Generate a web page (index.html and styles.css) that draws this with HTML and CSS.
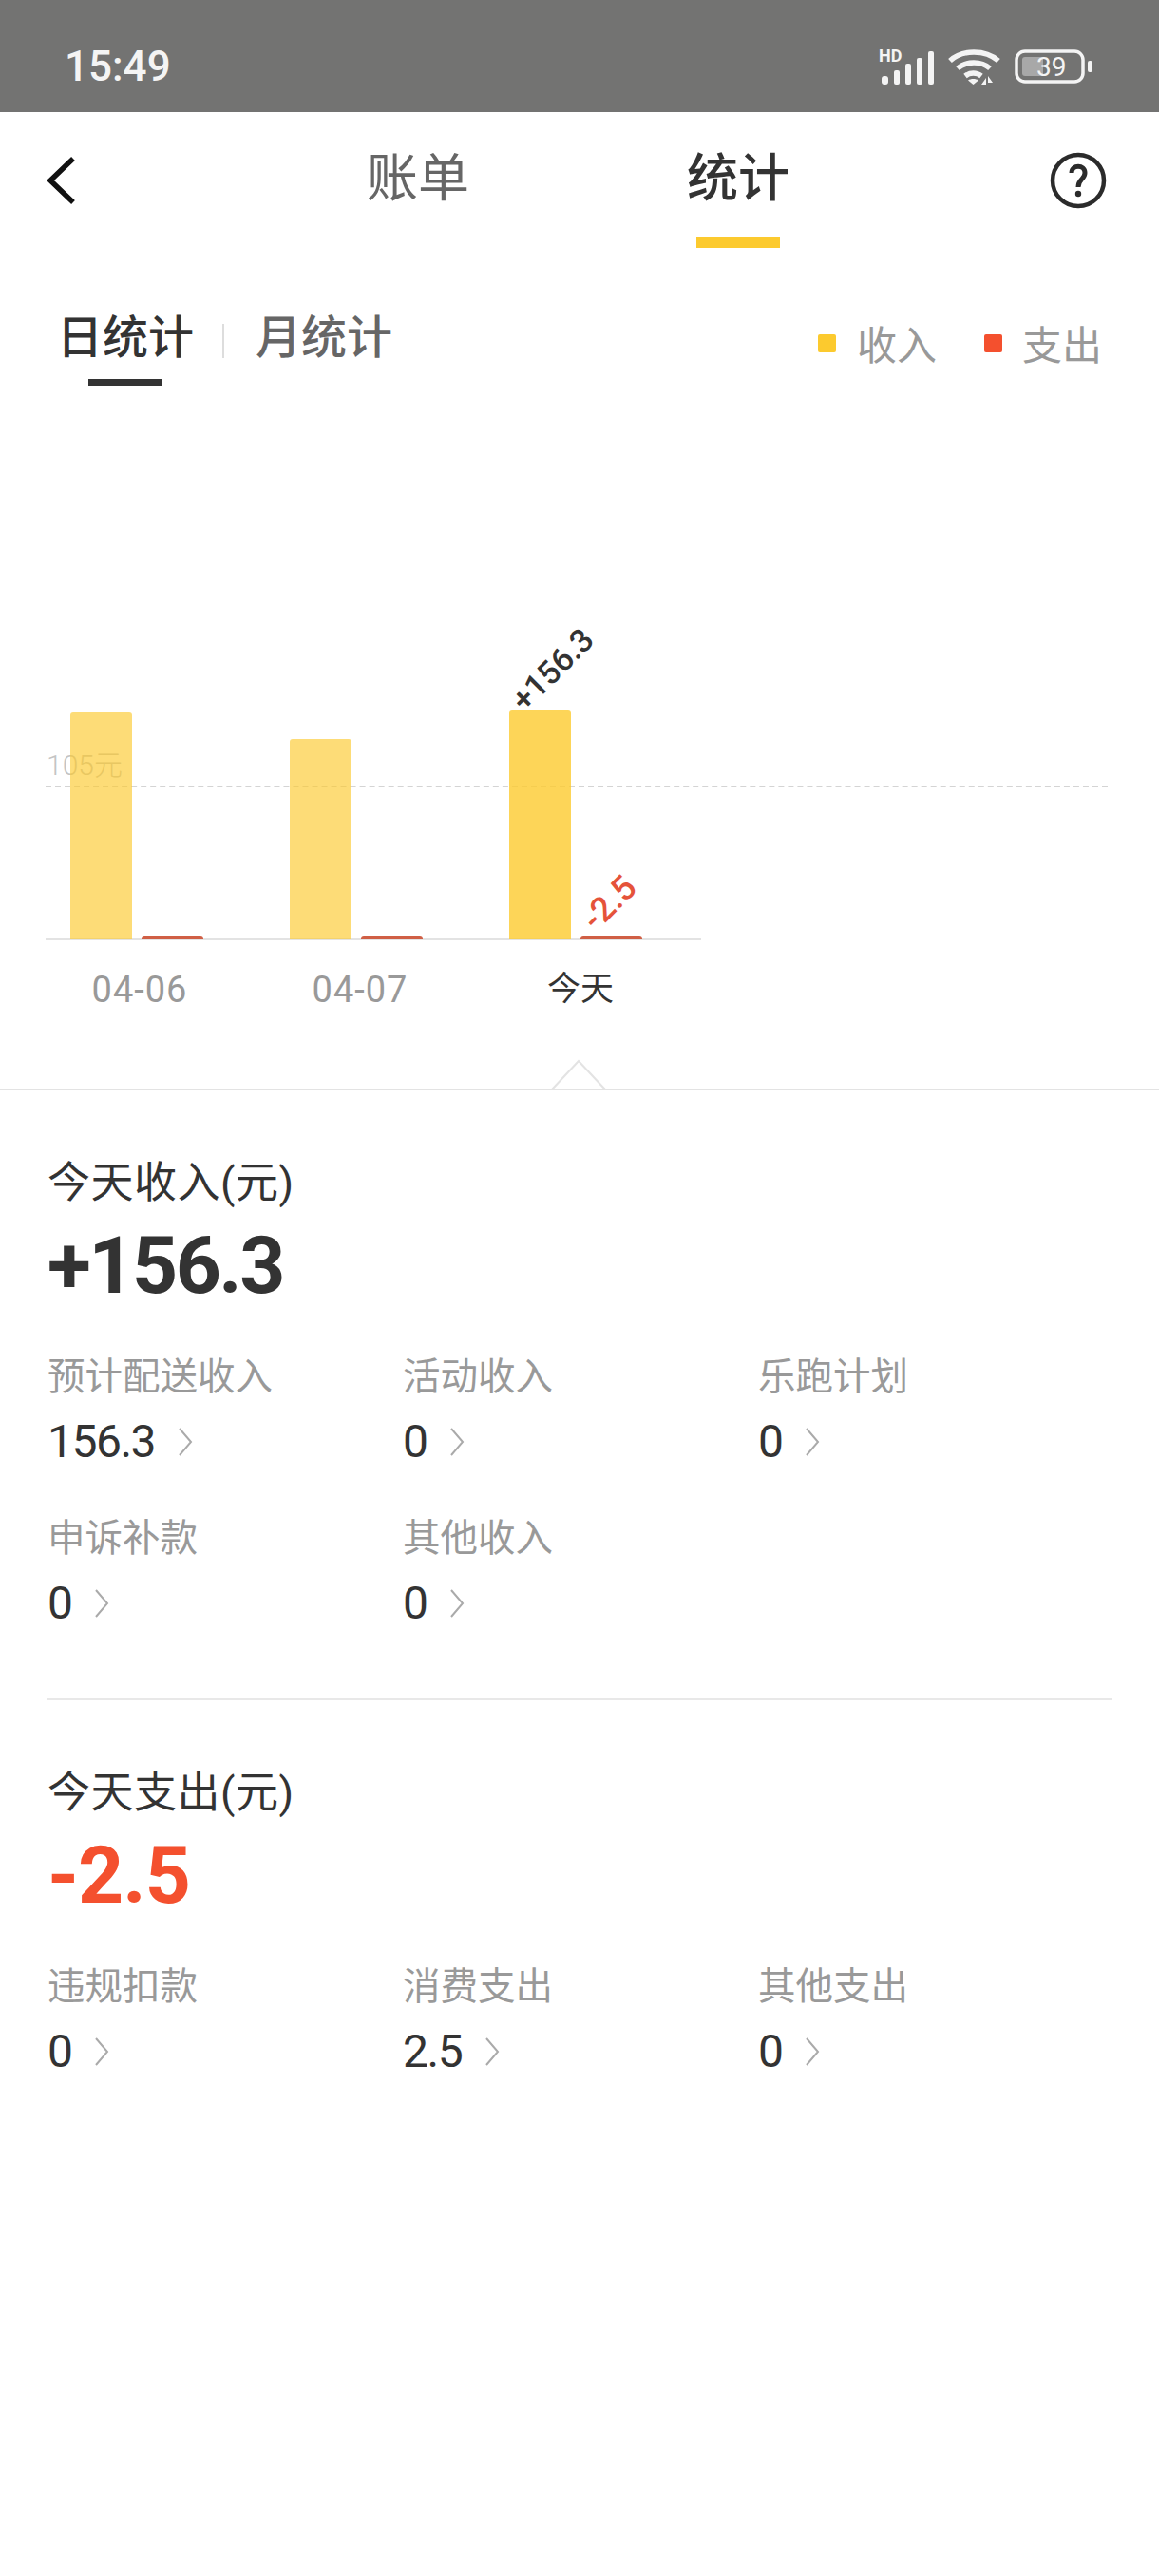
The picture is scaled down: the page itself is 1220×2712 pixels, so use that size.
FILE: index.html
```html
<!DOCTYPE html>
<html lang="zh-CN">
<head>
    <meta charset="UTF-8">
    <meta name="viewport" content="width=device-width, initial-scale=1.0">
    <title>统计</title>
    <link rel="stylesheet" href="styles.css">
</head>
<body>
    <div class="status-bar">
        <span class="time">15:49</span>
        <div class="status-icons">
            <svg class="icon-signal" width="62" height="48" viewBox="0 -4 62 48">
                <text x="4" y="15" class="hd-text">HD</text>
                <g fill="#f4f4f4">
                    <rect x="7" y="30" width="7" height="9" rx="3"/>
                    <rect x="20" y="24" width="6" height="15" rx="2"/>
                    <rect x="32" y="17" width="6" height="22" rx="2"/>
                    <rect x="44" y="11" width="6" height="28" rx="2"/>
                    <rect x="56" y="4" width="6" height="35" rx="2"/>
                </g>
            </svg>
            <svg class="icon-wifi" width="56" height="42" viewBox="0 0 56 42">
                <g fill="none" stroke="#f4f4f4" stroke-width="5.5">
                    <path d="M3 15C16 3 40 3 54 15"/>
                    <path d="M11 23C20 15 36 15 45 23"/>
                    <path d="M19 31C24 27 31 27 36 31"/>
                </g>
                <path d="M22 35.500C25 33.500 30 33.500 33 35.500L27.500 40Z" fill="#f4f4f4"/>
                <path d="M36 40L41 33V40ZM43 31L48 38H43Z" fill="#f4f4f4"/>
            </svg>
            <svg class="icon-battery" width="84" height="36" viewBox="0 0 84 36">
                <rect x="8" y="8" width="22" height="20" rx="3" fill="#a8a8a8"/>
                <rect x="2" y="2" width="70" height="32" rx="9" fill="none" stroke="#f4f4f4" stroke-width="3.500"/>
                <rect x="77" y="12" width="5" height="12" rx="2" fill="#f4f4f4"/>
                <text x="23" y="28" class="battery-text">39</text>
            </svg>
        </div>
    </div>

    <nav class="nav">
        <svg class="back" width="32" height="50" viewBox="0 0 32 50">
            <path d="M29 2L5 25L29 48" fill="none" stroke="#111" stroke-width="5.500"/>
        </svg>
        <div class="tabs">
            <div class="tab">账单</div>
            <div class="tab active">统计<div class="tab-line"></div></div>
        </div>
        <svg class="help" width="60" height="60" viewBox="0 0 60 60">
            <circle cx="30" cy="30" r="27" fill="none" stroke="#2b2b2b" stroke-width="4.500"/>
            <path d="M23 22C23 13 37 13 37 22C37 29 30 28 30 37" fill="none" stroke="#2b2b2b" stroke-width="5"/>
            <circle cx="30" cy="44" r="3.200" fill="#2b2b2b"/>
        </svg>
    </nav>

    <div class="sub-row">
        <div class="sub-tabs">
            <div class="sub-tab active">日统计<div class="sub-line"></div></div>
            <div class="sub-sep"></div>
            <div class="sub-tab">月统计</div>
        </div>
        <div class="legend">
            <span class="dot dot-income"></span><span class="legend-text">收入</span>
            <span class="dot dot-expense"></span><span class="legend-text">支出</span>
        </div>
    </div>

    <div class="chart">
        <div class="plot">
            <div class="guide"></div>
            <span class="guide-label">105元</span>
            <div class="group">
                <div class="bar bar-income" style="height: 239px"></div>
                <div class="bar bar-expense"></div>
            </div>
            <div class="group">
                <div class="bar bar-income" style="height: 211px"></div>
                <div class="bar bar-expense"></div>
            </div>
            <div class="group">
                <div class="bar bar-income today" style="height: 241px"><span class="bar-value">+156.3</span></div>
                <div class="bar bar-expense"><span class="bar-value value-red">-2.5</span></div>
            </div>
        </div>
        <div class="dates">
            <span class="date">04-06</span>
            <span class="date">04-07</span>
            <span class="date date-today">今天</span>
        </div>
        <svg class="pointer" width="58" height="33" viewBox="0 0 58 33">
            <path d="M1 32L29 2L57 32" fill="#fff" stroke="#e3e3e3" stroke-width="2"/>
        </svg>
    </div>

    <section class="summary">
        <h2 class="summary-title">今天收入(元)</h2>
        <div class="summary-total">+156.3</div>
        <div class="items">
            <div class="item">
                <div class="item-label">预计配送收入</div>
                <div class="item-value">156.3<svg class="arrow" width="16" height="30" viewBox="0 0 16 30"><path d="M2 1L14 15L2 29" fill="none" stroke="#aaa" stroke-width="2"/></svg></div>
            </div>
            <div class="item">
                <div class="item-label">活动收入</div>
                <div class="item-value">0<svg class="arrow" width="16" height="30" viewBox="0 0 16 30"><path d="M2 1L14 15L2 29" fill="none" stroke="#aaa" stroke-width="2"/></svg></div>
            </div>
            <div class="item">
                <div class="item-label">乐跑计划</div>
                <div class="item-value">0<svg class="arrow" width="16" height="30" viewBox="0 0 16 30"><path d="M2 1L14 15L2 29" fill="none" stroke="#aaa" stroke-width="2"/></svg></div>
            </div>
            <div class="item">
                <div class="item-label">申诉补款</div>
                <div class="item-value">0<svg class="arrow" width="16" height="30" viewBox="0 0 16 30"><path d="M2 1L14 15L2 29" fill="none" stroke="#aaa" stroke-width="2"/></svg></div>
            </div>
            <div class="item">
                <div class="item-label">其他收入</div>
                <div class="item-value">0<svg class="arrow" width="16" height="30" viewBox="0 0 16 30"><path d="M2 1L14 15L2 29" fill="none" stroke="#aaa" stroke-width="2"/></svg></div>
            </div>
        </div>
    </section>

    <section class="summary summary-expense">
        <h2 class="summary-title">今天支出(元)</h2>
        <div class="summary-total total-red">-2.5</div>
        <div class="items">
            <div class="item">
                <div class="item-label">违规扣款</div>
                <div class="item-value">0<svg class="arrow" width="16" height="30" viewBox="0 0 16 30"><path d="M2 1L14 15L2 29" fill="none" stroke="#aaa" stroke-width="2"/></svg></div>
            </div>
            <div class="item">
                <div class="item-label">消费支出</div>
                <div class="item-value">2.5<svg class="arrow" width="16" height="30" viewBox="0 0 16 30"><path d="M2 1L14 15L2 29" fill="none" stroke="#aaa" stroke-width="2"/></svg></div>
            </div>
            <div class="item">
                <div class="item-label">其他支出</div>
                <div class="item-value">0<svg class="arrow" width="16" height="30" viewBox="0 0 16 30"><path d="M2 1L14 15L2 29" fill="none" stroke="#aaa" stroke-width="2"/></svg></div>
            </div>
        </div>
    </section>
</body>
</html>
```

FILE: styles.css
```css
body {
    font-family: Roboto, "Noto Sans CJK SC", sans-serif;
    margin: 0;
    padding: 0;
    width: 1220px;
    height: 2712px;
    overflow: hidden;
    background-color: #fff;
    color: #333;
}
.status-bar {
    height: 118px;
    background-color: #737372;
    display: flex;
    align-items: center;
    justify-content: space-between;
    padding: 22px 68px 0;
    box-sizing: border-box;
}
.time {
    font-size: 44px;
    font-weight: 500;
    color: #f4f4f4;
}
.status-icons {
    display: flex;
    align-items: center;
}
.icon-signal {
    margin-right: 14px;
}
.icon-wifi {
    margin-right: 15px;
}
.hd-text {
    font-size: 18px;
    font-weight: 700;
    fill: #f4f4f4;
}
.battery-text {
    font-size: 28px;
    fill: #f4f4f4;
}
.nav {
    height: 150px;
    display: flex;
    align-items: flex-start;
    padding-left: 48px;
    padding-right: 55px;
}
.back {
    margin-top: 47px;
}
.tabs {
    display: flex;
    margin-left: 306px;
    margin-top: 44px;
    gap: 229px;
}
.tab {
    font-size: 54px;
    line-height: 54px;
    color: #666;
    width: 108px;
}
.tab.active {
    color: #333;
    font-weight: 500;
}
.tab-line {
    width: 88px;
    height: 11px;
    background-color: #fcca2e;
    margin: 34px auto 0;
}
.help {
    margin-left: auto;
    margin-top: 42px;
}
.sub-row {
    display: flex;
    justify-content: space-between;
    padding: 65px 60px 0 60px;
    height: 88px;
}
.sub-tabs {
    display: flex;
    align-items: flex-start;
}
.sub-tab {
    font-size: 48px;
    line-height: 46px;
    color: #666;
    font-weight: 500;
}
.sub-tab.active {
    color: #333;
}
.sub-line {
    width: 78px;
    height: 7px;
    background-color: #333;
    margin: 20px auto 0;
}
.sub-sep {
    width: 2px;
    height: 36px;
    background-color: #ddd;
    margin: 8px 33px 0 30px;
}
.legend {
    display: flex;
    align-items: center;
    height: 50px;
    margin-top: 2px;
}
.dot {
    width: 19px;
    height: 19px;
    border-radius: 2px;
    margin-top: 2px;
}
.dot-income {
    background-color: #fcca2e;
    margin-right: 22px;
}
.dot-expense {
    background-color: #f4502e;
    margin-right: 21px;
    margin-left: 50px;
}
.legend-text {
    font-size: 42px;
    color: #999;
}
.chart {
    position: relative;
    height: 727px;
    border-bottom: 2px solid #e3e3e3;
    box-sizing: border-box;
    padding: 0 48px;
}
.plot {
    position: relative;
    width: 690px;
    height: 569px;
    box-sizing: border-box;
    border-bottom: 2px solid #e3e3e3;
    display: flex;
    align-items: flex-end;
    padding-left: 26px;
    gap: 91px;
}
.guide {
    position: absolute;
    left: 0;
    top: 406px;
    width: 1118px;
    border-top: 2px dashed #d4d4d4;
}
.guide-label {
    position: absolute;
    left: 1px;
    top: 368px;
    font-size: 30px;
    line-height: 34px;
    color: #c4c4c4;
    font-weight: 300;
}
.group {
    display: flex;
    align-items: flex-end;
    gap: 10px;
    margin-bottom: -1px;
}
.bar {
    position: relative;
    width: 65px;
    border-radius: 3px 3px 0 0;
}
.bar-income {
    background-color: rgba(252, 202, 46, 0.65);
}
.bar-income.today {
    background-color: rgba(252, 202, 46, 0.8);
}
.bar-expense {
    height: 4px;
    background-color: #d05f45;
}
.bar-value {
    position: absolute;
    left: 20px;
    bottom: calc(100% - 6px);
    font-size: 34px;
    line-height: 34px;
    font-weight: 500;
    white-space: nowrap;
    color: #333;
    transform: rotate(-45deg);
    transform-origin: left bottom;
}
.value-red {
    color: #e5533a;
    font-size: 36px;
    bottom: 100%;
}
.dates {
    display: flex;
    padding-left: 38px;
    margin-top: 30px;
}
.date {
    width: 122px;
    margin-right: 110px;
    text-align: center;
    white-space: nowrap;
    font-size: 38px;
    line-height: 44px;
    letter-spacing: 1px;
    color: #999;
}
.date-today {
    color: #333;
    font-size: 35px;
    letter-spacing: 0;
}
.pointer {
    position: absolute;
    left: 580px;
    bottom: -2px;
}
.summary {
    margin: 0 49px 0 50px;
    padding: 68px 0 72px;
}
.summary-expense {
    border-top: 2px solid #e8e8e8;
    padding-bottom: 0;
}
.summary-title {
    margin: 0;
    font-size: 45px;
    line-height: 60px;
    font-weight: 400;
    color: #333;
    letter-spacing: 0.5px;
}
.summary-total {
    margin-top: 12px;
    font-size: 84px;
    line-height: 90px;
    font-weight: 700;
    letter-spacing: -2.5px;
    color: #333;
}
.total-red {
    color: #f4502e;
    letter-spacing: -1px;
}
.items {
    display: grid;
    grid-template-columns: repeat(3, 374px);
    row-gap: 49px;
    margin-top: 47px;
}
.item-label {
    font-size: 39.5px;
    line-height: 50px;
    color: #999;
}
.item-value {
    display: flex;
    align-items: center;
    margin-top: 15px;
    font-size: 48px;
    line-height: 56px;
    letter-spacing: -1.5px;
    color: #333;
}
.arrow {
    margin-left: 24px;
}
```
